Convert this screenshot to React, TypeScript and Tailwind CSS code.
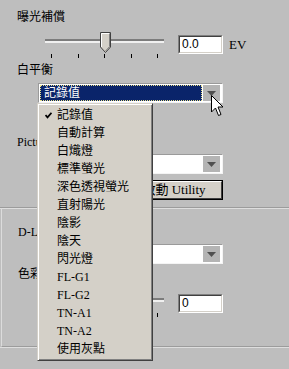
import React from 'react';

const wbItems = [
  '記錄值',
  '自動計算',
  '白熾燈',
  '標準螢光',
  '深色透視螢光',
  '直射陽光',
  '陰影',
  '陰天',
  '閃光燈',
  'FL-G1',
  'FL-G2',
  'TN-A1',
  'TN-A2',
  '使用灰點',
];

function Slider({ thumbLeft }: { thumbLeft: number }) {
  return (
    <div className="relative ml-[45px] w-[119px] h-[26px] pt-[7px]">
      {/* track */}
      <div className="h-[4px] border-t-2 border-t-[#7c7c7c] border-b-2 border-b-[#f0f0f0]" />
      {/* ticks */}
      <div className="mt-[11px] flex justify-between px-[6px]">
        <div className="w-px h-[4px] bg-black" />
        <div className="w-px h-[4px] bg-black" />
        <div className="w-px h-[4px] bg-black" />
        <div className="w-px h-[4px] bg-black" />
        <div className="w-px h-[4px] bg-black" />
      </div>
      {/* thumb */}
      <svg className="absolute top-0" style={{ left: thumbLeft }} width="11" height="21" viewBox="0 0 11 21">
        <path d="M0.5 0.5 H10.5 V15 L5.5 20.5 L0.5 15 Z" fill="#d4d0c8" stroke="#404040" />
        <path d="M1.5 15 V1.5 H9.5" fill="none" stroke="#ffffff" />
        <path d="M9.5 1.5 V14.6 L5.5 19" fill="none" stroke="#808080" />
      </svg>
    </div>
  );
}

function NumBox({ value }: { value: string }) {
  return (
    <div className="ml-[14px] mt-[3px] w-[45px] h-[19px] bg-white border border-t-[#808080] border-l-[#808080] border-b-white border-r-white">
      <div className="h-full border border-t-[#404040] border-l-[#404040] border-b-[#d4d0c8] border-r-[#d4d0c8] pl-[2px] text-[12px] leading-[15px] font-['Liberation_Sans',sans-serif]">
        {value}
      </div>
    </div>
  );
}

function ArrowBox() {
  return (
    <div className="w-[17px] h-full bg-[#b4b4b4] flex items-center justify-center">
      <svg width="9" height="5" viewBox="0 0 9 5">
        <path d="M0 0 H9 L4.5 5 Z" fill="#505050" />
      </svg>
    </div>
  );
}

function Select({ text, active }: { text?: string; active?: boolean }) {
  return (
    <div className="ml-[38px] w-[185px] flex bg-white border border-t-[#9a9a9a] border-l-[#9a9a9a] border-b-[#f4f4f4] border-r-[#f4f4f4] p-px">
      <div className="flex-1 h-[16px]">
        {active ? (
          <div className="h-full mr-px bg-[#0a246a] border border-dotted border-[#e8e08a] text-white text-[12px] leading-[14px] pl-[3px]">
            {text}
          </div>
        ) : (
          <div className="h-full text-[12px] leading-[16px] pl-[3px]">{text}</div>
        )}
      </div>
      <div className="h-[16px] mr-px">
        <ArrowBox />
      </div>
    </div>
  );
}

function Label({ children }: { children: React.ReactNode }) {
  return <div className="pl-[17px] h-[14px] text-[12px] leading-[14px] whitespace-nowrap">{children}</div>;
}

// label whose right part is covered by the open drop-down
function CutLabel({ children }: { children: React.ReactNode }) {
  return (
    <div className="pl-[17px] w-[37px] h-[14px] overflow-hidden text-[12px] leading-[14px] whitespace-nowrap">
      {children}
    </div>
  );
}

function App() {
  return (
    <div className="relative w-[289px] h-[369px] overflow-hidden bg-[#bebebe] text-black font-['Liberation_Serif','Noto_Sans_CJK_TC',serif]">
      {/* Exposure & WB section */}
      <div className="pt-[10px]">
        <Label>曝光補償</Label>
        <div className="mt-[8px] flex items-start">
          <Slider thumbLeft={55} />
          <NumBox value="0.0" />
          <div className="ml-[6px] mt-[3px] text-[13px] leading-[19px]">EV</div>
        </div>
        <div className="mt-[5px]">
          <Label>白平衡</Label>
        </div>
        <div className="mt-[6px]">
          <Select text="記錄值" active />
        </div>
        <div className="mt-[32px]">
          <CutLabel>Picture Control</CutLabel>
        </div>
        <div className="mt-[5px]">
          <Select />
        </div>
        <div className="mt-[6px] ml-[125px] w-[98px] h-[20px] border border-black">
          <div className="h-full bg-[#d4d0c8] border border-t-white border-l-white border-b-[#404040] border-r-[#404040] flex items-center justify-center text-[13px] leading-[16px]">
            啟動 Utility
          </div>
        </div>
      </div>

      {/* D-Lighting & colour section */}
      <div className="mt-[7px] h-[140px] border-t border-t-[#9c9c9c] shadow-[inset_0_1px_0_#dedede]">
        <div className="ml-[1px] h-full border-l border-l-[#dcdcdc] border-b border-b-[#9c9c9c]">
          <div className="pt-[17px] -ml-[1px]">
            <CutLabel>D-Lighting</CutLabel>
          </div>
          <div className="mt-[5px] -ml-[2px]">
            <Select />
          </div>
          <div className="mt-[3px] -ml-[1px]">
            <CutLabel>色彩飽和度</CutLabel>
          </div>
          <div className="mt-[10px] -ml-[2px] flex items-start">
            <Slider thumbLeft={55} />
            <NumBox value="0" />
          </div>
        </div>
      </div>
      <div className="h-px bg-[#dedede]" />

      {/* White balance drop-down menu */}
      <div className="absolute left-[37px] top-[103px] w-[116px] h-[258px] pt-[2px] bg-[#d4d0c8] border border-t-[#d4d0c8] border-l-[#d4d0c8] border-r-[#404040] border-b-[#404040] shadow-[inset_1px_1px_0_#ffffff,inset_-1px_-1px_0_#808080]">
        {wbItems.map((item, i) => (
          <div key={item} className="h-[18px] flex items-center text-[12px] leading-[18px] whitespace-nowrap">
            <div className="w-[19px] pl-[7px] flex items-center">
              {i === 0 && (
                <svg width="7" height="7" viewBox="0 0 7 7">
                  <path d="M0.5 3 L2.5 5.3 L6.5 0.8" fill="none" stroke="#000" strokeWidth="1.8" />
                </svg>
              )}
            </div>
            <span>{item}</span>
          </div>
        ))}
      </div>

      {/* mouse pointer */}
      <svg className="absolute left-[211px] top-[95px]" width="13" height="22" viewBox="0 0 13 22">
        <path d="M0.5 0.5 V17 L4.5 13 L7.5 20.5 L10 19.5 L7 12 H12 Z" fill="#ffffff" stroke="#000000" strokeLinejoin="miter" />
      </svg>
    </div>
  );
}

export default App;
